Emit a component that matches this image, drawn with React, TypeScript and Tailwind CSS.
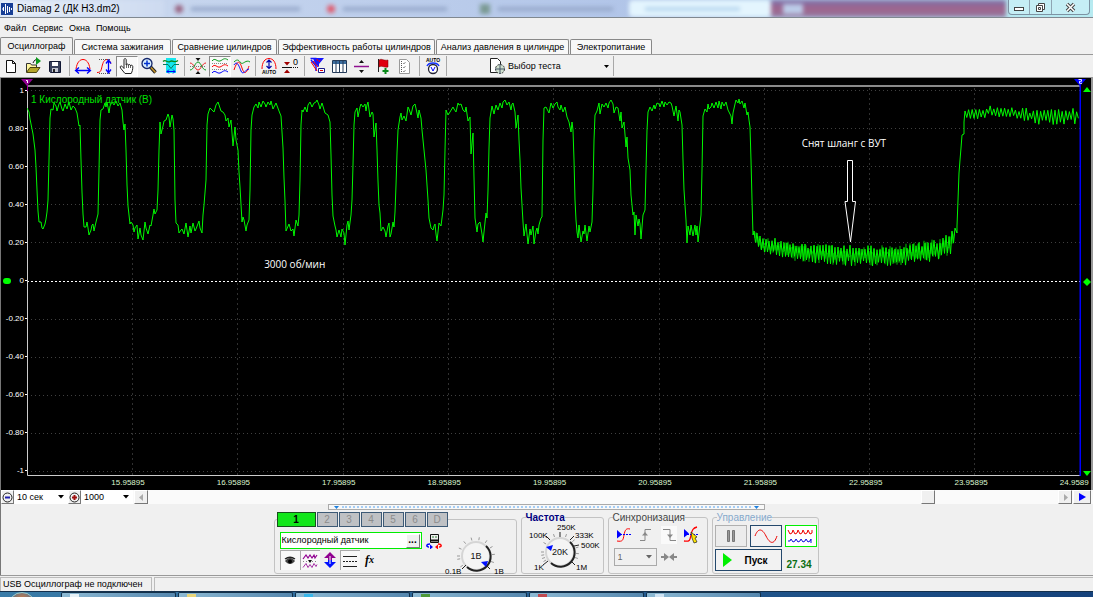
import { useState, type ReactNode } from "react"

type Tool = { name: string; art: ReactNode; pressed?: boolean }

// ---------- dados do traço (x, y na área do gráfico) ----------

const TRACE =
  "27,108 29,112 30,119 33,134 35,150 36,167 37,190 38,211 39,222 41,222 42,228 43,229 45,224 46,219 47,212 48,200 49,160 50,118 51,109 53,110 54,103 56,106 57,111 59,104 60,102 62,109 63,111 65,104 67,109 69,102 71,110 73,106 75,108 77,113 79,126 80,125 81,160 82,192 83,214 84,227 86,227 87,222 88,228 89,235 91,230 92,225 93,224 94,231 96,222 98,214 99,170 100,120 101,110 103,109 105,103 106,107 107,102 109,113 110,106 112,102 114,105 116,101 118,106 120,103 122,110 123,122 124,130 125,124 126,150 127,185 128,206 130,224 131,222 133,225 134,232 135,228 137,225 138,239 140,228 141,235 143,240 145,222 146,228 148,234 150,225 151,226 153,215 154,209 155,214 157,210 158,190 159,150 160,122 161,134 163,126 164,121 166,120 168,114 169,117 170,127 172,115 173,119 174,130 175,200 176,223 178,225 179,233 181,230 182,229 184,234 186,223 188,237 190,226 191,233 193,223 195,231 196,229 199,221 200,228 202,233 203,215 204,205 206,180 207,125 208,114 210,108 212,110 214,112 216,105 218,102 220,108 221,111 223,112 225,115 226,121 228,118 229,127 231,120 233,146 235,127 236,140 238,150 239,172 240,187 242,222 243,217 244,220 246,231 247,225 249,220 250,190 251,130 252,115 254,107 256,104 258,108 259,102 261,107 263,101 265,104 266,107 268,102 270,105 271,101 273,109 276,103 279,111 281,116 283,148 284,178 285,201 286,231 289,224 291,231 293,229 294,236 296,220 298,226 299,215 300,180 301,125 302,110 303,112 305,107 307,112 308,105 310,102 312,107 314,103 316,102 317,100 319,105 320,109 322,103 325,113 328,115 330,122 331,155 332,195 333,216 335,226 336,230 337,237 339,230 341,237 342,229 344,233 345,245 347,225 348,221 349,230 351,215 352,200 353,165 354,125 355,112 357,108 358,117 360,107 361,104 363,107 365,104 366,111 367,105 368,102 370,117 372,112 373,114 374,137 376,123 377,150 378,181 379,205 380,213 381,231 383,227 385,231 386,237 388,226 389,223 390,237 391,234 393,222 394,227 395,212 396,185 397,153 398,130 400,117 401,113 402,120 404,116 406,121 408,107 409,109 411,115 413,106 415,104 417,113 418,118 419,110 421,118 422,130 424,150 426,170 428,200 429,218 431,228 433,230 434,226 435,224 436,234 437,241 439,223 441,226 443,210 444,195 445,150 446,110 448,115 450,112 453,107 454,109 456,112 458,103 459,105 461,104 463,110 465,112 466,107 468,121 470,117 471,154 473,133 474,178 475,218 477,232 478,224 480,222 482,234 483,242 484,232 486,213 487,218 488,190 489,148 490,118 492,106 494,114 496,105 498,110 500,103 502,108 503,102 505,100 507,105 509,102 511,110 512,104 513,103 515,112 516,128 518,115 519,140 520,160 521,188 523,222 524,236 526,224 528,244 530,229 531,235 533,226 534,244 536,231 537,228 538,234 539,225 541,218 542,217 543,140 544,108 546,107 547,109 549,113 551,103 553,108 555,104 557,102 558,107 560,110 561,105 563,112 565,107 567,117 569,122 571,132 572,122 573,130 574,160 575,200 576,220 577,232 578,238 579,225 581,242 583,231 584,234 585,225 587,241 589,226 590,232 592,222 593,190 594,140 595,115 597,111 599,103 600,114 602,104 604,107 606,103 608,108 609,103 611,100 613,104 614,113 616,107 618,108 620,121 621,112 622,128 624,122 626,147 627,137 628,158 630,170 631,195 633,215 634,212 635,235 636,215 638,226 639,219 640,224 641,239 643,215 645,210 646,170 647,130 648,112 650,107 652,111 654,105 655,109 657,103 659,104 660,107 662,101 664,107 665,102 667,105 669,102 671,103 672,106 674,116 676,106 678,121 679,110 680,112 682,125 683,160 684,190 686,220 687,243 688,226 690,235 691,225 693,236 695,225 696,235 697,226 698,242 700,224 701,215 702,170 703,116 705,109 707,112 708,104 709,109 711,107 712,103 714,108 716,102 718,108 719,101 721,109 722,102 724,106 726,102 728,110 729,112 731,116 732,124 733,113 735,104 736,100 738,103 739,99 740,104 742,101 744,108 745,103 747,115 748,112 749,120 750,127 751,160 752,200 753,235 754,232"

// envelope do ruído: x, topo, base
const LOW = [[754, 231, 244], [762, 236, 252], [780, 238, 258], [800, 243, 262], [850, 245, 266], [895, 245, 266], [922, 241, 264], [940, 238, 259], [950, 233, 256], [956, 224, 242]]
const HIGH = [[965, 111, 121], [975, 107, 120], [992, 105, 117], [1010, 105, 120], [1032, 108, 124], [1050, 109, 125], [1080, 107, 124]]

function noise(env: number[][], step: number, depth: number) {
  const pts: string[] = []
  const last = env[env.length - 1][0]
  let i = 0
  for (let x = env[0][0]; x < last; x += step) {
    const k = env.findIndex((p) => p[0] > x)
    const a = env[k - 1]
    const b = env[k]
    const t = (x - a[0]) / (b[0] - a[0])
    const top = a[1] + (b[1] - a[1]) * t
    const bottom = a[2] + (b[2] - a[2]) * t
    const wobble = Math.abs(Math.sin(i * 12.9898) * 43758.5) % 1
    const span = bottom - top
    const y = i % 2 ? bottom - wobble * span * depth : top + wobble * span * depth
    pts.push(`${x.toFixed(1)},${y.toFixed(1)}`)
    i++
  }
  return pts.join(" ")
}

const SIGNAL = [
  TRACE,
  noise(LOW, 1.5, 0.25),
  "957,233 957,226 958,200 959,173 960,160 961,148 962,135 964,134 964,122",
  noise(HIGH, 1.8, 0.35),
].join(" ")

const yLabels = ["1", "0.80", "0.60", "0.40", "0.20", "0", "-0.20", "-0.40", "-0.60", "-0.80", "-1"]
const xLabels = ["15.95895", "16.95895", "17.95895", "18.95895", "19.95895", "20.95895", "21.95895", "22.95895", "23.95895", "24.9589"]

// ---------- ícones ----------

function Ico({ children, w = 18, h = 18 }: { children: ReactNode; w?: number; h?: number }) {
  return (
    <svg width={w} height={h} viewBox={`0 0 ${w} ${h}`} fill="none" aria-hidden="true" className="relative shrink-0">
      {children}
    </svg>
  )
}

const fileTools: Tool[] = [
  { name: "Новый", art: <path d="M3.500 3.500h6l3 3v9h-9zM9.500 3.500v3h3" fill="#fff" stroke="#111" /> },
  {
    name: "Открыть",
    art: (
      <>
        <path d="M1.500 15V6.500h4l1 1.500h5v2" fill="#fff7a0" stroke="#333" />
        <path d="M1.500 15.500L5 10.500h10l-3.500 5z" fill="#b5a52a" stroke="#4a4310" />
        <path d="M8 6c1-3 3-3.500 4-3.500" stroke="#111" />
        <path d="M11 0l5 4-5 4z" fill="#0a9a1a" />
      </>
    ),
  },
  {
    name: "Сохранить",
    art: (
      <>
        <path d="M2.500 4.500h11v11h-10l-1-1z" fill="#39415c" stroke="#111733" />
        <path d="M5 5h6v4H5z" fill="#fff" />
        <path d="M5 11h6v4H5z" fill="#c4c8d4" />
        <path d="M6 12h2v3H6z" fill="#222" />
      </>
    ),
  },
]

const cursorTools: Tool[] = [
  {
    name: "Период",
    art: (
      <>
        <path d="M2 12C3 5 6 2.500 9 2.500S15 5 16 12" stroke="#f00" />
        <path d="M2 13.500h14M5 10.500l-3.500 3 3.500 3M13 10.500l3.500 3-3.500 3" stroke="#00f" strokeWidth="1.300" />
      </>
    ),
  },
  {
    name: "Амплитуда",
    art: (
      <>
        <path d="M1 15.500c4 0 4-2 5-6s2-7 5-7c2 0 3 2 4 4" stroke="#f00" />
        <path d="M3 2.500h12M3 16.500h12" stroke="#555" strokeDasharray="1 1" />
        <path d="M12.500 4v11M10 6.500L12.500 3 15 6.500M10 12.500l2.500 3.500 2.500-3.500" stroke="#00f" strokeWidth="1.300" />
      </>
    ),
  },
  {
    name: "Рука",
    pressed: true,
    art: (
      <>
        <path d="M7 16.500L2.500 11c-1-2 .8-2.500 1.800-1.500L6 11.500V3c0-2 2.200-2 2.200 0v5c0-1.500 2.200-1.500 2.200.5 0-1.500 2.200-1.200 2.200.5 0-1.200 2.200-1 2.200.6 0 3-.6 5-1.600 6.900z" fill="#fff" stroke="#222" />
        <path d="M8.500 8v3M10.500 8.500V11M12.500 9v2" stroke="#222" strokeWidth=".7" />
      </>
    ),
  },
  {
    name: "Масштаб",
    art: (
      <>
        <path d="M10.500 10l5 5.500" stroke="#222" strokeWidth="3.500" />
        <path d="M10.500 10l5 5.500" stroke="#c8952a" strokeWidth="1.500" />
        <circle cx="7" cy="6.500" r="5" fill="#d8efff" stroke="#12246a" strokeWidth="1.300" />
        <path d="M4 6.500h6M7 3.500v6" stroke="#0030d0" strokeWidth="1.500" />
      </>
    ),
  },
  {
    name: "Фрагмент",
    art: (
      <>
        <path d="M4 1h10v15H4z" fill="#14e6ee" />
        <path d="M1 4.500c3-3 4 2 7 0s4 2 8-1" stroke="#0a8a1a" strokeWidth="1.300" />
        <path d="M1 7.500h5l3 4 3-4h5" stroke="#0a7a5a" />
        <path d="M5 14.500h8M7 12.500l-2 2 2 2M11 12.500l2 2-2 2" stroke="#00f" />
      </>
    ),
  },
]

const viewTools: Tool[] = [
  {
    name: "Наложение",
    art: (
      <>
        <path d="M1 6c4 0 5 7 8 7s4-7 8-7" stroke="#f02020" />
        <path d="M1 13c4 0 5-8 8-8s4 8 8 8" stroke="#0a9a1a" />
        <path d="M6.500 1h5L9 4zM6.500 17h5L9 14z" fill="#111" />
        <path d="M1 9.500h16" stroke="#777" strokeDasharray="1 1" />
      </>
    ),
  },
  {
    name: "Раздельно",
    pressed: true,
    art: (
      <>
        <path d="M1 4c3-4 5 1 8 0s4-4 8-1" stroke="#0a9a1a" />
        <path d="M1 10c3-4 5 1 8 0s4-4 8-1" stroke="#f00" />
        <path d="M1 16c3-4 5 1 8 0s4-4 8-1" stroke="#00f" />
        <path d="M1 6.500h16M1 12.500h16" stroke="#888" strokeDasharray="1 1" />
      </>
    ),
  },
  {
    name: "Вместе",
    art: (
      <>
        <path d="M1 5c4-4 5-1 7 1s5-4 9-1" stroke="#0a9a1a" />
        <path d="M1 13c4-12 6-8 8-2s4 7 7-2" stroke="#f00" />
        <path d="M1 8c3-5 5 1 7 6s5-2 8-2" stroke="#00f" />
      </>
    ),
  },
]

const levelTools: Tool[] = [
  {
    name: "Авто",
    art: (
      <>
        <path d="M2 12C2 5 5 1.500 9 1.500S16 5 16 12" stroke="#f00" />
        <path d="M9 2.500v9M6.500 5.500L9 3l2.500 2.500M6.500 9L9 11.500 11.500 9" stroke="#00a" strokeWidth="1.200" />
        <text x="2" y="17" fontSize="5" fontWeight="bold" fill="#000">AUTO</text>
      </>
    ),
  },
  {
    name: "Ноль",
    art: (
      <>
        <path d="M2 5h6L5 8.500zM2 16h6l-3-3.500z" fill="#a00000" />
        <path d="M0 10.500h9" stroke="#111" />
        <path d="M9 10.500h7" stroke="#111" strokeDasharray="1 1" />
        <text x="11" y="8" fontSize="9" fill="#000">0</text>
      </>
    ),
  },
]

const markTools: Tool[] = [
  {
    name: "Фильтр",
    art: (
      <>
        <path d="M1.500 1.500h6M2 3l5 6v5" stroke="#1414ff" strokeWidth="1.500" />
        <path d="M4 1h11l-5 6v3l-4-3z" fill="#1414ff" />
        <path d="M2 5l6 9M4 4l5 6M8 2l1 2M11 3l-1 2" stroke="#f00" />
        <path d="M9.500 11.500h6v4h-6z" fill="#fff" stroke="#1a1a8a" />
        <path d="M11 13.500h3" stroke="#d00" />
      </>
    ),
  },
  {
    name: "Таблица",
    art: (
      <>
        <path d="M1.500 3.500h14v12h-14z" fill="#fff" stroke="#243a58" />
        <path d="M2 4h13v3H2z" fill="#3c6ea0" />
        <path d="M5 4v11M8.500 4v11M12 4v11" stroke="#243a58" />
      </>
    ),
  },
  {
    name: "Разделить",
    art: (
      <>
        <path d="M1 9.500h15" stroke="#901090" strokeWidth="1.500" />
        <path d="M6 6h5L8.500 3zM6 13h5l-2.500 3z" fill="#111" />
      </>
    ),
  },
  {
    name: "Метка",
    art: (
      <>
        <path d="M3.500 2v13" stroke="#222" />
        <path d="M4 3c3-2 4 1 9 0v7c-4 1-6-2-9 0z" fill="#e00010" stroke="#700" strokeWidth=".5" />
        <path d="M10.500 11v6M7.500 14h6" stroke="#0a8a1a" strokeWidth="2" />
      </>
    ),
  },
  {
    name: "Отчёт",
    art: (
      <>
        <path d="M2.500 2.500h7l3 3v11h-10z" fill="#fff" stroke="#999" />
        <path d="M4.500 4v12" stroke="#555" strokeDasharray="1 1" />
        <path d="M6 6l1 1 1.500-2M6 10l1 1 1.500-2M6 14l1 1 1.500-2" stroke="#999" />
      </>
    ),
  },
]

const autoTool: Tool[] = [
  {
    name: "Автонастройка",
    art: (
      <>
        <text x="2" y="4.500" fontSize="5" fontWeight="bold" fill="#000">AUTO</text>
        <path d="M3 9c2-4 10-4 12 0" stroke="#1430ff" strokeWidth="1.500" />
        <circle cx="9" cy="12" r="4.500" fill="#fff" stroke="#223" strokeWidth="1.300" />
        <path d="M7 10l2 4 2-4" stroke="#00f" />
      </>
    ),
  },
]

function ToolGroup({ tools }: { tools: Tool[] }) {
  return (
    <>
      {tools.map((t) => (
        <button
          key={t.name}
          aria-label={t.name}
          className={`flex h-[21px] w-[22px] shrink-0 items-center justify-center ${
            t.pressed ? "border border-t-[#888] border-l-[#888] border-r-white border-b-white bg-[#f9f9f9]" : ""
          }`}
        >
          <Ico>{t.art}</Ico>
        </button>
      ))}
      <span className="mx-0.5 h-[20px] w-px shrink-0 bg-[#a8a8a8]" />
    </>
  )
}

// ---------- partes da janela ----------

function TitleBar() {
  return (
    <header className="relative flex h-[18px] shrink-0 items-center overflow-hidden border-b border-[#808890] bg-linear-to-r from-[#cfdcf0] via-[#b0c4e8] via-60% to-[#b7e6ee]">
      {/* janela de trás vista pelo vidro */}
      <div className="absolute inset-0 flex items-center blur-[2px]" aria-hidden="true">
        <span className="h-full w-[15%] shrink-0 bg-linear-to-r from-[#e8f0f9] to-[#cddaf0]" />
        <span className="ml-[1%] size-2 shrink-0 rounded-full bg-[#97627f]" />
        <span className="ml-2 h-1 w-[10%] bg-[#96a8ca]" />
        <span className="ml-[2.500%] size-2 shrink-0 rounded-full bg-[#e05a6c]" />
        <span className="ml-2 h-1 w-[9.500%] bg-[#96a8ca]" />
        <span className="ml-[3%] size-2.5 shrink-0 bg-[#7b9a94]" />
        <span className="ml-2 h-1 w-[10.500%] bg-[#96a8ca]" />
        <span className="ml-[1.500%] flex h-full w-[13%] shrink-0 items-center rounded bg-[#e4f5fe] pl-4">
          <span className="h-1 w-3/4 bg-[#b9d8ef]" />
        </span>
        <span className="flex h-full flex-1 items-center bg-linear-to-b from-[#7a70aa] via-[#a0648c] to-[#93779f] pl-3">
          <span className="h-2.5 w-5 bg-[#bccbe8]" />
        </span>
        <span className="h-full w-[8%] shrink-0 bg-[#b7ecf2]" />
      </div>
      <Ico w={14} h={14}>
        <path d="M1 1h12v12H1z" fill="#173f96" />
        <path d="M2 7h1.500V5v4M5.500 9V2v10M7.500 11V4M9.500 5v5M11.500 6v2" stroke="#fff" />
      </Ico>
      <h1 className="relative ml-[3px] flex-1 text-[10px] leading-[16px] text-black">Diamag 2 (ДК Н3.dm2)</h1>
      <div className="relative mr-[3px] flex h-[15px] self-start rounded-b border border-t-0 border-[#7d93a3] bg-[#c5eef5]">
        <button aria-label="Свернуть" className="flex w-[21px] items-center justify-center border-r border-[#8fa5b3]">
          <span className="mt-1 h-1 w-2.5 border border-[#444] bg-white" />
        </button>
        <button aria-label="Восстановить" className="flex w-[22px] items-center justify-center border-r border-[#8fa5b3]">
          <Ico w={11} h={11}>
            <path d="M3.500 1.500h6v6h-6z" fill="#fff" stroke="#444" />
            <path d="M1.500 3.500h6v6h-6z" fill="#fff" stroke="#444" />
            <path d="M3.500 5.500h2v2h-2z" stroke="#444" />
          </Ico>
        </button>
        <button aria-label="Закрыть" className="flex w-[37px] items-center justify-center">
          <Ico w={11} h={11}>
            <path d="M2 2l7 7M9 2L2 9" stroke="#444" strokeWidth="3.500" />
            <path d="M2 2l7 7M9 2L2 9" stroke="#fff" strokeWidth="1.500" />
          </Ico>
        </button>
      </div>
    </header>
  )
}

const tabs = [
  { label: "Осциллограф", width: "w-[73px]" },
  { label: "Система зажигания", width: "w-[97px]" },
  { label: "Сравнение цилиндров", width: "w-[105px]" },
  { label: "Эффективность работы цилиндров", width: "w-[157px]" },
  { label: "Анализ давления в цилиндре", width: "w-[133px]" },
  { label: "Электропитание", width: "w-[82px]" },
]

function Chart() {
  return (
    <main className="flex min-h-0 flex-1 flex-col border-r-2 border-l border-r-[#999] border-l-[#777] bg-black pt-[7px]">
      <div className="flex min-h-0 flex-1">
        <div className="relative flex w-[26px] shrink-0 flex-col justify-between text-right text-[8px] leading-[11px] text-white">
          {yLabels.map((y) => (
            <span key={y} className="flex items-center justify-end">
              {y}
              <i className="ml-px h-px w-[2px] bg-white" />
            </span>
          ))}
          <i className="absolute top-1/2 left-[2px] h-1.5 w-2 -translate-y-1/2 rounded-full bg-[#00ff00]" />
        </div>
        <div className="relative min-w-0 flex-1">
          <svg viewBox="27 85 1054 391" preserveAspectRatio="none" className="absolute size-full" fill="none" role="img" aria-label="Осциллограмма">
            {yLabels.map((y, i) => (
              <path
                key={y}
                d={`M27 ${Math.round(90 + i * 38.1) + 0.5}H1080`}
                stroke={y === "0" ? "#fff" : "#404040"}
                strokeDasharray={y === "0" ? "2 2" : "1 3"}
              />
            ))}
            {xLabels.map((x, i) => (
              <path key={x} d={`M${Math.round(132 + i * 105.3) + 0.5} 88V475`} stroke="#303030" strokeDasharray="2 3" />
            ))}
            <path d="M27 86H1081" stroke="#8a8a8a" strokeWidth="2" />
            <path d="M27.500 87V475.500H1081" stroke="#ccc" />
            <path d="M27.500 85v6" stroke="#a000a0" />
            <polyline points={noise(LOW, 1, 0.6)} stroke="#008000" vectorEffect="non-scaling-stroke" />
            <polyline points={SIGNAL} stroke="#00f800" strokeLinejoin="bevel" vectorEffect="non-scaling-stroke" />
            <path d="M847.500 160.500h5v41h3L850.500 242l-5.500-40.500h2.500z" stroke="#fff" fill="#000" />
            <path d="M1080.500 85V476" stroke="#0000ff" strokeWidth="2" />
          </svg>
          <span className="absolute top-[8px] left-[4px] text-[10px] leading-[13px] text-[#00e000]">1 Кислородный датчик (В)</span>
          <span className="absolute top-[44%] left-[22.500%] text-[10px] leading-[15px] text-white font-['Open_Sans',sans-serif]">3000 об/мин</span>
          <span className="absolute top-[13%] left-[73.500%] text-[10px] leading-[15px] text-white font-['Open_Sans',sans-serif]">Снят шланг с ВУТ</span>
          {/* маркеры */}
          <svg width="12" height="8" viewBox="0 0 12 8" className="absolute -top-[6px] -left-[6px]" aria-hidden="true">
            <path d="M0 0h12L6 7z" fill="#900090" />
            <path d="M5 1.500h1.500V4" stroke="#fff" fill="none" />
          </svg>
          <svg width="12" height="8" viewBox="0 0 12 8" className="absolute -top-[6px] -right-[5px]" aria-hidden="true">
            <path d="M0 0h12L6 7z" fill="#00f" />
            <path d="M4.500 .5h3v1.800H5.500v2H8" stroke="#fff" strokeWidth=".9" fill="none" />
          </svg>
        </div>
        <div className="flex w-[10px] shrink-0 flex-col items-center justify-between pt-[2px] pl-[2px]">
          <Ico w={8} h={5}><path d="M0 5L4 0l4 5z" fill="#00ff00" /></Ico>
          <Ico w={8} h={8}><path d="M4 0l4 4-4 4-4-4z" fill="#00ff00" /></Ico>
          <Ico w={8} h={5}><path d="M0 0h8L4 5z" fill="#00ff00" /></Ico>
        </div>
      </div>
      <div className="mr-[10px] ml-[26px] flex h-[14px] shrink-0 text-[8px] leading-[14px] text-[#dcf5cf]">
        <i className="w-[8%] shrink-0" />
        {xLabels.map((x) => (
          <span key={x} className="w-[10%] shrink-0">{x}</span>
        ))}
      </div>
    </main>
  )
}

const raised = "border border-t-white border-l-white border-r-[#777] border-b-[#777] bg-[#f0f0f0]"

function Combo({ label, value, className }: { label: string; value: string; className: string }) {
  return (
    <span className={`relative flex shrink-0 items-center ${className}`}>
      <select aria-label={label} defaultValue={value} className="h-full w-full appearance-none px-[3px] text-[9px] leading-[13px]">
        <option>{value}</option>
      </select>
      <svg width="6" height="4" viewBox="0 0 6 4" className="pointer-events-none absolute right-1" aria-hidden="true">
        <path d="M0 0h6L3 3.500z" fill="currentColor" />
      </svg>
    </span>
  )
}

function ScrollRow() {
  return (
    <div className="flex h-[14px] shrink-0 items-stretch border-l border-[#777] bg-[#fafafa]">
      <button aria-label="Уменьшить" className={`flex w-[13px] items-center justify-center ${raised}`}>
        <Ico w={11} h={11}>
          <circle cx="5.500" cy="5.500" r="4.500" stroke="#222" />
          <path d="M3 5.500h5" stroke="#2020b0" strokeWidth="2" />
        </Ico>
      </button>
      <Combo label="Развёртка" value="10 сек" className="w-[54px] bg-white" />
      <button aria-label="Увеличить" className={`flex w-[13px] items-center justify-center ${raised}`}>
        <Ico w={11} h={11}>
          <circle cx="5.500" cy="5.500" r="4.500" stroke="#222" />
          <path d="M3 5.500h5M5.500 3v5" stroke="#a01010" strokeWidth="2" />
        </Ico>
      </button>
      <Combo label="Точек" value="1000" className="w-[52px] bg-white" />
      <button aria-label="Влево" className={`ml-px flex w-[14px] items-center justify-center ${raised}`}>
        <Ico w={5} h={7}><path d="M4 0v7L0 3.500z" fill="#aaa" /></Ico>
      </button>
      <div className="flex flex-1 justify-end">
        <button aria-label="Прокрутка" className={`mr-[13.500%] w-[14px] ${raised}`} />
      </div>
      <button aria-label="Вправо" className={`flex w-[14px] items-center justify-center ${raised}`}>
        <Ico w={5} h={7}><path d="M1 0v7l4-3.500z" fill="#aaa" /></Ico>
      </button>
      <button aria-label="В конец" className={`ml-px mr-[2px] flex w-[18px] items-center justify-center ${raised}`}>
        <Ico w={8} h={8}><path d="M1 0v8l7-4z" fill="#0000ff" /></Ico>
      </button>
    </div>
  )
}

const group = "h-[62px] min-w-0 shrink-0 rounded-[3px] border border-[#c3c3c3]"
const legend = "ml-[4px] text-[10px] leading-[11px]"

function Knob({ value, cx, ticks, children, label, width }: { value: string; cx: number; ticks: number[]; children: ReactNode; label: string; width: number }) {
  return (
    <svg width={width} height="50" viewBox={`0 0 ${width} 50`} role="img" aria-label={label} fontSize="8" className="shrink-0">
      {ticks.map((a) => {
        const r = (a * Math.PI) / 180
        return (
          <path
            key={a}
            d={`M${(cx + 16 * Math.cos(r)).toFixed(1)} ${(29 + 16 * Math.sin(r)).toFixed(1)}L${(cx + 19 * Math.cos(r)).toFixed(1)} ${(29 + 19 * Math.sin(r)).toFixed(1)}`}
            stroke="#999"
          />
        )
      })}
      <circle cx={cx} cy="29" r="14" fill="#f4f4f4" stroke="#d5d5d5" strokeWidth="2" />
      <path d={`M${cx + 10} 19A14 14 0 0 1 ${cx - 9} 40`} fill="none" stroke="#222" strokeWidth="2" />
      <text x={cx} y="32" textAnchor="middle" fontSize="9" fill="#111">{value}</text>
      {children}
    </svg>
  )
}

function ChannelGroup() {
  const [channel, setChannel] = useState("1")
  return (
    <fieldset className={`w-[243px] ${group}`}>
      <legend className="ml-[2px] flex gap-px">
        {["1", "2", "3", "4", "5", "6", "D"].map((c) => (
          <button
            key={c}
            onClick={() => setChannel(c)}
            className={`h-[15px] border text-[10px] leading-[13px] ${
              c === channel ? "w-[39px] border-[#17501c] bg-[#12e61a] font-bold text-black" : "w-[21px] border-[#3d5a76] bg-[#bfc1c4] text-[#8c8c8c]"
            }`}
          >
            {c}
          </button>
        ))}
      </legend>
      <div className="flex">
        <div className="mt-[5px] ml-[5px] flex flex-col">
          <div className="flex items-center gap-1">
            <div className="flex h-[17px] w-[142px] items-center border border-[#00ee00] bg-white pr-px">
              <input aria-label="Имя канала" defaultValue="Кислородный датчик" className="min-w-0 flex-1 px-px text-[9px] leading-[13px] text-black" />
              <button aria-label="Выбрать датчик" className={`flex h-[14px] w-[14px] items-start justify-center text-[10px] leading-[9px] font-bold ${raised}`}>...</button>
            </div>
            <button aria-label="Параметры датчика">
              <Ico w={16} h={16}>
                <path d="M4.500 1.500h8v8h-8z" fill="#eee" stroke="#111" />
                <path d="M5 7.500h7" stroke="#111" strokeWidth="2" />
                <path d="M6 4h2m1 0h2" stroke="#2a7a30" />
                <path d="M4 11c-4 0-4 3-1 3" stroke="#00f" strokeWidth="1.500" />
                <path d="M12 11c4 0 4 3 1 3" stroke="#f00" strokeWidth="1.500" />
                <path d="M4 11.500v5l3-2.500z" fill="#00f" />
                <path d="M12 11.500v5L9 14z" fill="#f00" />
              </Ico>
            </button>
          </div>
          <div className="mt-px flex">
            <button aria-label="Показать" className="flex size-[20px] items-center justify-center border-t border-l border-[#aaa] bg-[#f8f8f8]">
              <Ico w={12} h={10}>
                <path d="M1 5c3-4 7-4 10 0-3 4-7 4-10 0z" fill="#444" />
                <path d="M1 3c3-2 7-2 10 0" stroke="#222" strokeWidth="1.500" />
                <circle cx="6" cy="5.500" r="2" fill="#000" />
              </Ico>
            </button>
            <button aria-label="Сглаживание" className="flex size-[20px] items-center justify-center border-t border-l border-[#aaa] bg-[#f8f8f8]">
              <Ico w={16} h={16}>
                <path d="M1 6l3-4 2 3 2-3 2 3 2-3 1 3 2-3" stroke="#900090" strokeWidth="1.200" />
                <path d="M1 14.500l3-4 2 4 2-3 2 3 2-4 2 3 1-2" stroke="#900090" strokeWidth=".8" />
                <path d="M1 8.500h14" stroke="#888" strokeDasharray="1 2" />
                <path d="M6 7h4L8 10z" fill="#111" />
              </Ico>
            </button>
            <button aria-label="Инверсия" className="flex size-[20px] items-center justify-center">
              <Ico w={14} h={16}>
                <path d="M7 0l6 6H9v2H5V6H1z" fill="#900090" />
                <path d="M7 16l6-6H9V8H5v2H1z" fill="#0010ff" />
                <path d="M7 4v8" stroke="#fff" />
              </Ico>
            </button>
            <button aria-label="Уровни" className="flex size-[20px] items-center justify-center border-t border-l border-[#aaa] bg-[#f8f8f8]">
              <Ico w={16} h={14}>
                <path d="M1 2.500h14M1 12.500h14" stroke="#222" />
                <path d="M1 7.500h14" stroke="#222" strokeDasharray="2 1" />
              </Ico>
            </button>
            <button className="flex size-[20px] items-center justify-center text-[12px] leading-[14px] font-bold italic font-['Liberation_Serif',serif]">
              <span>f</span>
              <span className="text-[10px]">x</span>
            </button>
          </div>
        </div>
        <Knob value="1В" cx={34} width={66} label="Чувствительность" ticks={[-180, -155, -130, -105, -80, -55, -30, -5, 20, 145, 170]}>
          <path d="M20 42l4-4M48 42l-4-4" stroke="#222" />
          <path d="M39 35l7-1-2 6z" fill="#0010ff" />
          <text x="3" y="47">0.1В</text>
          <text x="52" y="47">1В</text>
        </Knob>
      </div>
    </fieldset>
  )
}

function FrequencyGroup() {
  return (
    <fieldset className={`w-[83px] ${group}`}>
      <legend className={`${legend} font-bold text-[#000080]`}>Частота</legend>
      <Knob value="20K" cx={38} width={81} label="Частота" ticks={[-210, -190, -150, -130, -110, -70, -40, -15, 5, 20, 160, 180]}>
        <path d="M38 9v5M24 13l4 4M52 13l-4 4M57 22l-5 1M21 42l5-4M53 42l-4-4" stroke="#222" />
        <path d="M24 24l7-2-2 6z" fill="#0010ff" />
        <text x="35" y="7">250K</text>
        <text x="7" y="15">100K</text>
        <text x="53" y="15">333K</text>
        <text x="59" y="25">500K</text>
        <text x="12" y="47">1K</text>
        <text x="54" y="47">1M</text>
      </Knob>
    </fieldset>
  )
}

function SyncGroup() {
  return (
    <fieldset className={`w-[100px] ${group}`}>
      <legend className={`${legend} text-[#444]`}>Синхронизация</legend>
      <div className="mt-[3px] flex justify-between px-[7px]">
        <button aria-label="Синхронизация">
          <Ico w={16} h={18}>
            <path d="M1 15c6 1 6-1 7-6s2-7 6-6" stroke="#f00" />
            <path d="M1 8.500h14" stroke="#00f" strokeDasharray="2 1" />
            <path d="M1 4l5 4.500-5 4z" fill="#00f" />
          </Ico>
        </button>
        <button aria-label="По фронту">
          <Ico w={16} h={18}>
            <path d="M2 14.500h5v-11h6" stroke="#888" />
            <path d="M4 9.500h6L7 6z" fill="#888" />
          </Ico>
        </button>
        <button aria-label="По спаду" className="bg-[#fafafa]">
          <Ico w={16} h={18}>
            <path d="M2 3.500h7v11h6" stroke="#888" />
            <path d="M6 8.500h6L9 12z" fill="#888" />
          </Ico>
        </button>
        <button aria-label="Однократно">
          <Ico w={16} h={18}>
            <path d="M1 15c6 1 6-1 7-6s2-7 6-8" stroke="#f00" strokeWidth="1.300" />
            <path d="M1 8.500h14" stroke="#00f" strokeDasharray="2 1" />
            <path d="M1 3l5 4.500-5 4z" fill="#00f" />
            <path d="M8 6l6 5-2 1 2 4-3 1-2-5z" fill="#ffe600" stroke="#222" strokeWidth=".7" />
          </Ico>
        </button>
      </div>
      <div className="mt-[4px] flex items-center gap-1 pl-[5px] text-[#888]">
        <Combo label="Канал синхронизации" value="1" className="h-[18px] w-[43px] border border-[#aaa] text-[#666]" />
        <Ico w={16} h={8}>
          <path d="M0 4h5M11 4h5" stroke="#888" strokeWidth="2" />
          <path d="M3 0l5 4-5 4zM13 0L8 4l5 4z" fill="#888" />
        </Ico>
      </div>
    </fieldset>
  )
}

function ControlGroup() {
  return (
    <fieldset className={`w-[107px] ${group}`}>
      <legend className={`${legend} text-[#86a9cc]`}>Управление</legend>
      <div className="mt-[2px] grid grid-cols-[32px_32px_32px] gap-x-[3px] gap-y-[2px] pl-[2px]">
        <button aria-label="Пауза" className="flex h-[22px] items-center justify-center border border-[#b0b0b0] bg-[#ececec]">
          <Ico w={10} h={14}><path d="M1.500 1.500h2v11h-2zM6.500 1.500h2v11h-2z" fill="#999" stroke="#777" /></Ico>
        </button>
        <button aria-label="Синус" className="flex h-[22px] items-center justify-center border border-[#24486c] bg-[#f2f2f4]">
          <Ico w={24} h={18}><path d="M1 9C4 1 8 1 12 9s8 9 11 0" stroke="#e00" /></Ico>
        </button>
        <button aria-label="Несколько каналов" className="flex h-[22px] items-center justify-center border border-[#00ee00] bg-white">
          <Ico w={28} h={18}>
            <path d="M1 3l2 4 2-1 1-3 2 4 2-1 1-3 2 4 2-1 1-3 2 4 2-1 1-3 2 4 2-1V3" stroke="#e00" />
            <path d="M1 14h2l1-2 2 3 2-1 1-2 2 3 2-1 1-2 2 3 2-1 1-2 2 3 2-1 1-2v4" stroke="#1010e0" />
          </Ico>
        </button>
        <button className="col-span-2 flex h-[22px] items-center border border-[#24486c] bg-[#f2f2f2] pl-[7px] text-[10px] leading-[13px] font-bold text-black">
          <Ico w={9} h={14}><path d="M0 0l9 7-9 7z" fill="#00f000" /></Ico>
          <span className="flex-1 text-center">Пуск</span>
        </button>
        <output className="self-end pl-[2px] text-[10px] leading-[13px] font-bold text-[#0a6e14]">27.34</output>
      </div>
    </fieldset>
  )
}

const tasks = ["bg-[#e6f1f7]", "bg-[#e9d67a]", "bg-[#39b7ea]", "bg-[#4e9a3a]", "bg-[#c04a50]", "bg-[#cfe3f3]"]

export default function App() {
  const [tab, setTab] = useState("Осциллограф")

  return (
    <div className="flex h-screen min-h-[400px] flex-col overflow-hidden bg-[#f0f0f0] text-black font-['Liberation_Sans',sans-serif]">
      <TitleBar />

      <nav className="flex h-[20px] shrink-0 items-center gap-[6px] pl-[4px] text-[9px] leading-[13px]">
        {["Файл", "Сервис", "Окна", "Помощь"].map((m) => (
          <button key={m}>{m}</button>
        ))}
      </nav>

      <div role="tablist" className="flex h-[17px] shrink-0 items-end gap-px border-b border-[#999]">
        {tabs.map((t) => (
          <button
            key={t.label}
            role="tab"
            aria-selected={t.label === tab}
            onClick={() => setTab(t.label)}
            className={`shrink-0 rounded-t-[2px] border border-b-0 border-[#888] text-[9px] leading-[13px] whitespace-nowrap ${t.width} ${
              t.label === tab ? "h-[17px] bg-[#f0f0f0]" : "h-[15px] bg-[#f8f8f8]"
            }`}
          >
            {t.label}
          </button>
        ))}
      </div>

      <div role="toolbar" className="flex h-[23px] shrink-0 items-center border-b border-[#999] pl-px">
        <ToolGroup tools={fileTools} />
        <ToolGroup tools={cursorTools} />
        <ToolGroup tools={viewTools} />
        <ToolGroup tools={levelTools} />
        <ToolGroup tools={markTools} />
        <ToolGroup tools={autoTool} />
        <button className="ml-[39px] flex w-[124px] items-center gap-[2px] text-[9px] leading-[13px]">
          <Ico>
            <path d="M2.500 1.500h7l3 3v11h-10z" fill="#fff" stroke="#222" />
            <circle cx="12" cy="12" r="4.500" fill="#cfe0cf" stroke="#333" strokeDasharray="2 1" />
            <path d="M12 7v10M7 12h10" stroke="#456" />
          </Ico>
          Выбор теста
          <svg width="5" height="3" viewBox="0 0 5 3" className="mr-[3px] ml-auto" aria-hidden="true"><path d="M0 0h5L2.500 3z" /></svg>
        </button>
        <span className="ml-px h-[20px] w-px bg-[#a8a8a8]" />
      </div>

      <Chart />
      <ScrollRow />

      <div className="flex h-[6px] shrink-0 justify-center border-l border-[#777] pr-[2px]">
        <button aria-label="Свернуть панель" className="flex w-[437px] items-center justify-between border border-[#aaa] bg-[#f8f8f8] px-[5px]">
          <Ico w={5} h={3}><path d="M0 0h5L2.500 3z" fill="#1c80e0" /></Ico>
          <i className="mx-[3px] flex-1 border-t-2 border-dotted border-[#a5cdf5]" />
          <Ico w={5} h={3}><path d="M0 0h5L2.500 3z" fill="#1c80e0" /></Ico>
        </button>
      </div>

      <div className="flex h-[65px] shrink-0 items-end justify-center gap-1 border-l border-[#777] pr-[2px] pb-px">
        <ChannelGroup />
        <FrequencyGroup />
        <SyncGroup />
        <ControlGroup />
      </div>

      <footer className="flex h-[16px] shrink-0 gap-[2px] border-t border-[#999] pt-px text-[9px] leading-[13px]">
        <span className="w-[152px] border border-b-0 border-[#bbb] pl-[2px] whitespace-nowrap">USB Осциллограф не подключен</span>
        <span className="flex-1 border border-r-0 border-b-0 border-[#bbb]" />
      </footer>

      <div className="flex h-[6px] shrink-0 gap-[2px] overflow-hidden border-t border-[#14304c] bg-linear-to-r from-[#3a7ca8] to-[#15427c]">
        <span className="relative ml-[8px] h-[28px] w-[51px] shrink-0">
          <i className="absolute top-0 left-0 size-[28px] rounded-full border border-[#9cc] bg-[radial-gradient(circle_at_50%_30%,#e8803a,#3c6f9c_60%)]" />
        </span>
        {tasks.map((c) => (
          <button key={c} aria-label="Окно" className="h-full w-[115px] shrink-0 rounded-t-[2px] border border-b-0 border-[#12304a] bg-linear-to-r from-[#8dbad4] to-[#5587ae] pl-2">
            <i className={`block h-[3px] w-[9px] ${c}`} />
          </button>
        ))}
      </div>
    </div>
  )
}
